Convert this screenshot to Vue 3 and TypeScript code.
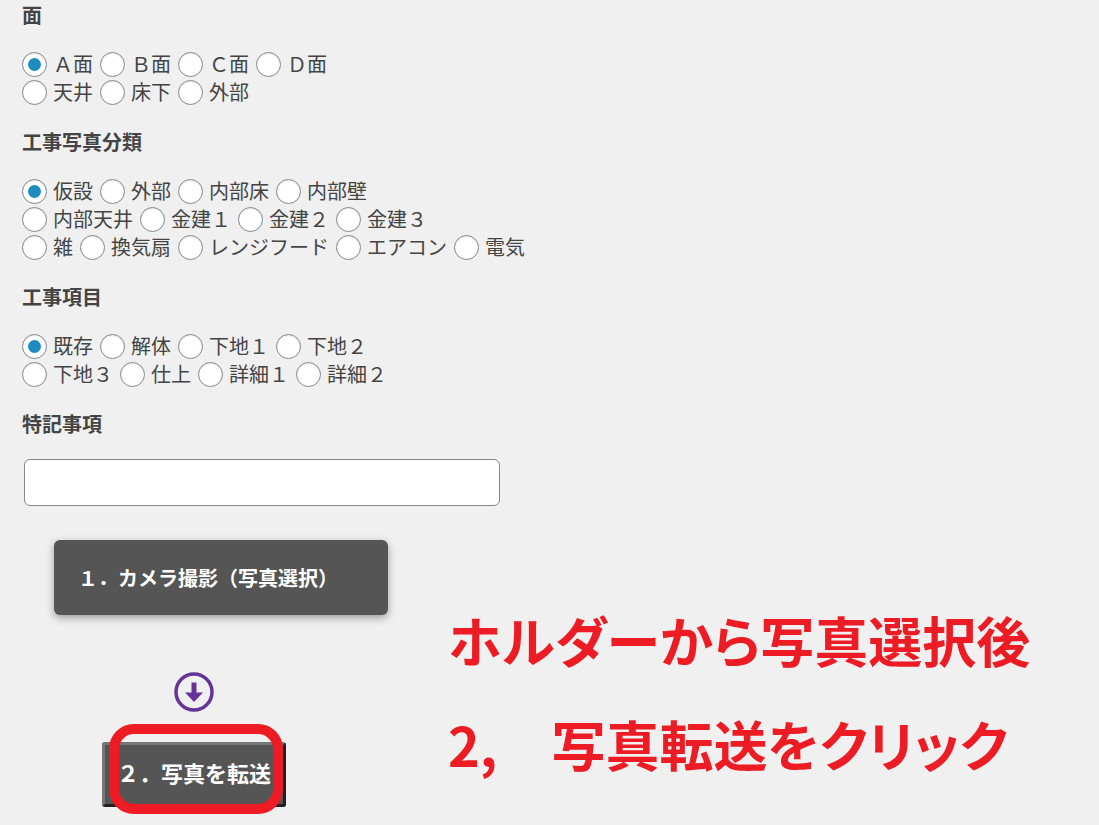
<script setup lang="ts">
import { ref } from 'vue'

interface Group {
  name: string
  title: string
  rows: string[][]
}

const groups: Group[] = [
  { name: 'face', title: '面', rows: [['Ａ面', 'Ｂ面', 'Ｃ面', 'Ｄ面'], ['天井', '床下', '外部']] },
  {
    name: 'category',
    title: '工事写真分類',
    rows: [
      ['仮設', '外部', '内部床', '内部壁'],
      ['内部天井', '金建１', '金建２', '金建３'],
      ['雑', '換気扇', 'レンジフード', 'エアコン', '電気'],
    ],
  },
  {
    name: 'item',
    title: '工事項目',
    rows: [['既存', '解体', '下地１', '下地２'], ['下地３', '仕上', '詳細１', '詳細２']],
  },
]

const selected = ref<Record<string, string>>({ face: 'Ａ面', category: '仮設', item: '既存' })
const note = ref('')
</script>

<template>
  <main class="page">
    <form @submit.prevent>
      <fieldset v-for="group in groups" :key="group.name" class="group">
        <legend class="title">{{ group.title }}</legend>
        <div v-for="(row, r) in group.rows" :key="r" class="row">
          <label v-for="option in row" :key="option" class="option">
            <input v-model="selected[group.name]" type="radio" :name="group.name" :value="option" />
            <span>{{ option }}</span>
          </label>
        </div>
      </fieldset>

      <div class="field">
        <label class="title" for="note">特記事項</label>
        <input id="note" v-model="note" class="text" type="text" />
      </div>

      <div class="bottom">
        <div class="actions">
          <button type="button" class="camera">１．カメラ撮影（写真選択）</button>
          <div class="send-step">
            <svg class="arrow" viewBox="0 0 40 40" aria-hidden="true">
              <circle cx="20" cy="20" r="18" fill="none" stroke="#663399" stroke-width="3.500" />
              <path d="M17.500 10.500h5V20.500H29L20 30l-9-9.500h6.500z" fill="#663399" />
            </svg>
            <div class="send-wrap">
              <button type="submit" class="send">２．写真を転送</button>
              <span class="frame"></span>
            </div>
          </div>
        </div>
        <div class="guide">
          <p>ホルダーから写真選択後</p>
          <p>2,　写真転送をクリック</p>
        </div>
      </div>
    </form>
  </main>
</template>

<style>
body {
  margin: 0;
  background: #f0f0f0;
}
</style>

<style scoped>
.page {
  box-sizing: border-box;
  padding: 1px 22px 10px;
  color: #444;
  font-family: "Noto Sans CJK JP", "Noto Sans", sans-serif;
  font-size: 20px;
  line-height: 28px;
}

.group {
  min-width: 0;
  margin: 0 0 22px;
  padding: 0;
  border: 0;
}

.title {
  display: block;
  margin-bottom: 21px;
  padding: 0;
  font-weight: 700;
}

.row {
  display: flex;
  flex-wrap: wrap;
  column-gap: 7px;
  font-weight: 400;
}

.option {
  display: flex;
  align-items: center;
  gap: 6px;
  height: 28px;
}

.option input {
  appearance: none;
  display: grid;
  place-items: center;
  box-sizing: border-box;
  flex: none;
  width: 25px;
  height: 25px;
  margin: 0;
  border: 1px solid #7e8993;
  border-radius: 50%;
  background: #fff;
  box-shadow: inset 0 1px 2px rgba(0, 0, 0, 0.1);
}

.option input:checked::before {
  content: "";
  width: 13px;
  height: 13px;
  border-radius: 50%;
  background: #1e8cbe;
}

.text {
  display: block;
  box-sizing: border-box;
  width: 476px;
  max-width: 100%;
  height: 47px;
  margin: 0 2px;
  padding: 0 12px;
  border: 1px solid #7e8993;
  border-radius: 6px;
  background: #fff;
  color: inherit;
  font: inherit;
}

.bottom {
  display: grid;
  grid-template-columns: 396px 1fr;
  column-gap: 30px;
  margin-top: 34px;
}

.actions {
  padding-left: 32px;
}

button {
  display: block;
  box-sizing: border-box;
  color: #fff;
  background: #555;
  font: inherit;
  font-weight: 700;
  white-space: nowrap;
}

.camera {
  width: 334px;
  height: 75px;
  padding: 0 24px;
  border: 0;
  border-radius: 6px;
  box-shadow: 0 3px 8px rgba(0, 0, 0, 0.35);
  text-align: left;
}

.send-step {
  display: flex;
  flex-direction: column;
  align-items: center;
  width: 184px;
  margin: 57px 0 0 48px;
}

.arrow {
  display: block;
  width: 40px;
  height: 40px;
}

.send-wrap {
  position: relative;
  width: 100%;
  margin-top: 30px;
}

.send {
  width: 100%;
  height: 65px;
  padding: 0 0 6px;
  border: 3px solid;
  border-color: #767676 #212121 #212121 #767676;
  border-radius: 3px;
  font-size: 22px;
}

.frame {
  position: absolute;
  inset: -18px 3px -7px 7px;
  border: 10px solid #ed1c24;
  border-radius: 25px;
  pointer-events: none;
}

.guide {
  padding-top: 48px;
  color: #ed1c24;
  font-size: 54px;
  font-weight: 700;
  line-height: 104px;
  font-feature-settings: "palt";
  white-space: nowrap;
}

.guide p {
  margin: 0;
}
</style>
